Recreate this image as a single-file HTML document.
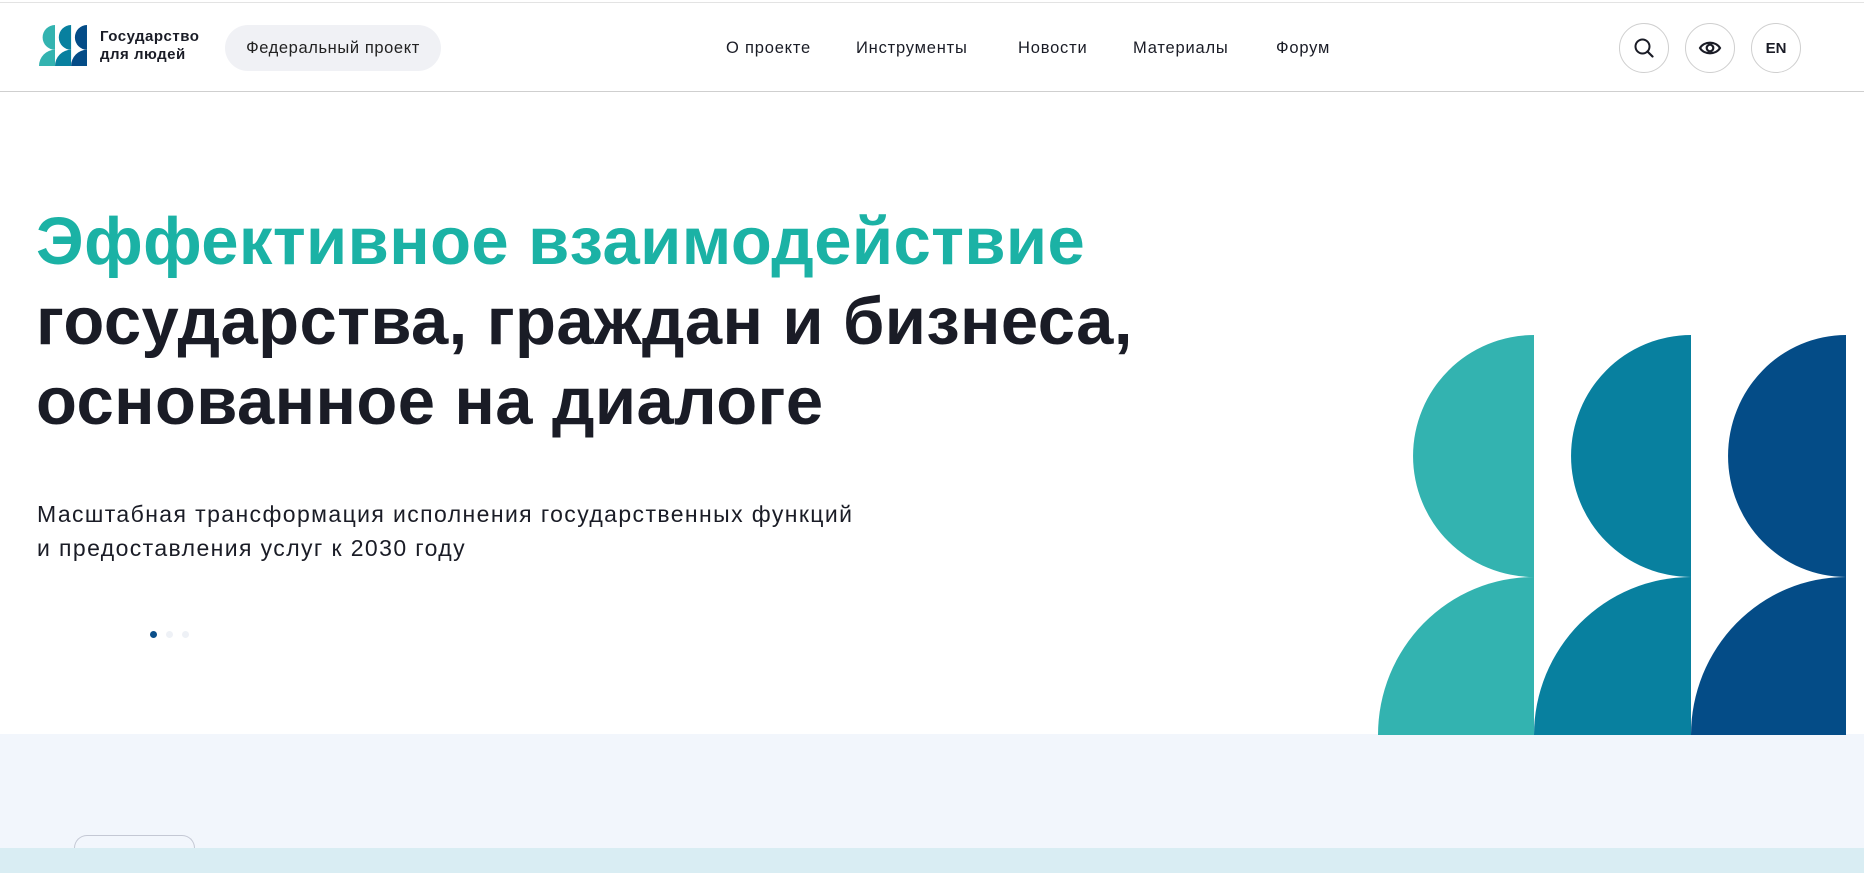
<!DOCTYPE html>
<html><head><meta charset="utf-8">
<style>
*{margin:0;padding:0;box-sizing:border-box}
body{width:1864px;height:873px;overflow:hidden;background:#fff;font-family:"Liberation Sans","DejaVu Sans",sans-serif;color:#1a1c26;position:relative}
.topline{position:absolute;left:0;top:2px;width:1864px;height:1px;background:#e3e3e3}
.header{position:absolute;left:0;top:0;width:1864px;height:92px;border-bottom:1px solid #cfcfcf}
.logo{position:absolute;left:39px;top:25px}
.brand{position:absolute;left:100px;top:28px;font-size:15px;font-weight:bold;line-height:18px;color:#1a1c26;letter-spacing:0.5px}
.pill{position:absolute;left:225px;top:25px;width:216px;height:46px;border-radius:23px;background:#f0f1f5;font-size:16.5px;line-height:46px;text-align:center;color:#222;letter-spacing:0.6px}
.nav a{position:absolute;top:38px;font-size:16.5px;color:#1a1c26;text-decoration:none;line-height:20px;letter-spacing:0.8px}
.circ{position:absolute;top:23px;width:50px;height:50px;border:1px solid #cfcfcf;border-radius:50%;display:flex;align-items:center;justify-content:center;font-size:15px;font-weight:bold}
h1{position:absolute;left:36px;top:202px;font-size:67px;line-height:80px;font-weight:bold;letter-spacing:0.4px;white-space:nowrap}
h1 .t{color:#1bb2a5}
.sub{position:absolute;left:37px;top:497px;font-size:23px;line-height:34px;color:#1a1c26;letter-spacing:1.4px;white-space:nowrap}
.dot{position:absolute;top:631px;width:7px;height:7px;border-radius:50%;background:#eef1f6}
.light{position:absolute;left:0;top:734px;width:1864px;height:139px;background:#f2f6fc}
.btn{position:absolute;left:74px;top:835px;width:121px;height:13px;border:1px solid #c4c8d4;border-bottom:none;border-radius:20px 20px 0 0}
.band{position:absolute;left:0;top:848px;width:1864px;height:25px;background:#d9edf3}
</style></head><body>
<div class="topline"></div>
<div class="header">
  <svg class="logo" width="48" height="41" viewBox="0 0 468 400">
    <path d="M156 0 A121 121 0 0 0 156 242 L156 0Z" fill="#33b3b0"/>
    <path d="M156 242 A156 158 0 0 0 0 400 L156 400Z" fill="#33b3b0"/>
    <path d="M313 0 A120 121 0 0 0 313 242 Z" fill="#08809f"/>
    <path d="M313 242 A157 158 0 0 0 156 400 L313 400Z" fill="#08809f"/>
    <path d="M468 0 A118 121 0 0 0 468 242 Z" fill="#044c87"/>
    <path d="M468 242 A155 158 0 0 0 313 400 L468 400Z" fill="#044c87"/>
  </svg>
  <div class="brand">Государство<br>для людей</div>
  <div class="pill">Федеральный проект</div>
  <div class="nav">
    <a style="left:726px">О проекте</a>
    <a style="left:856px">Инструменты</a>
    <a style="left:1018px">Новости</a>
    <a style="left:1133px">Материалы</a>
    <a style="left:1276px">Форум</a>
  </div>
  <div class="circ" style="left:1619px"><svg width="22" height="22" viewBox="0 0 22 22"><circle cx="9.5" cy="9.5" r="7" fill="none" stroke="#1a1c26" stroke-width="2"/><path d="M14.5 14.5 L19.5 19.5" stroke="#1a1c26" stroke-width="2.2" stroke-linecap="round"/></svg></div>
  <div class="circ" style="left:1685px"><svg width="24" height="18" viewBox="0 0 24 18"><path d="M2 9 C6 2 18 2 22 9 C18 16 6 16 2 9Z" fill="none" stroke="#1a1c26" stroke-width="2.2"/><circle cx="12" cy="9" r="3.3" fill="none" stroke="#1a1c26" stroke-width="2.2"/></svg></div>
  <div class="circ" style="left:1751px">EN</div>
</div>
<h1><span class="t">Эффективное взаимодействие</span><br>государства, граждан и бизнеса,<br>основанное на диалоге</h1>
<div class="sub">Масштабная трансформация исполнения государственных функций<br>и предоставления услуг к 2030 году</div>
<div class="dot" style="left:150px;background:#0b4f8a"></div>
<div class="dot" style="left:166px"></div>
<div class="dot" style="left:182px"></div>
<div class="light"></div>
<svg style="position:absolute;left:1378px;top:335px" width="468" height="400" viewBox="0 0 468 400">
  <path d="M156 0 A121 121 0 0 0 156 242 Z" fill="#33b3b0"/>
  <path d="M156 242 A156 158 0 0 0 0 400 L156 400Z" fill="#33b3b0"/>
  <path d="M313 0 A120 121 0 0 0 313 242 Z" fill="#08809f"/>
  <path d="M313 242 A157 158 0 0 0 156 400 L313 400Z" fill="#08809f"/>
  <path d="M468 0 A118 121 0 0 0 468 242 Z" fill="#044c87"/>
  <path d="M468 242 A155 158 0 0 0 313 400 L468 400Z" fill="#044c87"/>
</svg>
<div class="btn"></div>
<div class="band"></div>
</body></html>
